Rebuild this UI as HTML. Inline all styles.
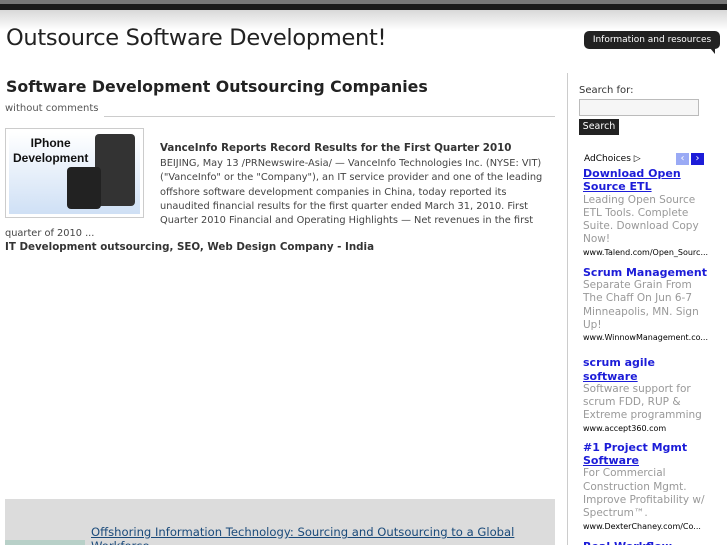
<!DOCTYPE html>
<html><head><meta charset="utf-8"><style>
*{margin:0;padding:0;box-sizing:border-box}
html{overflow:hidden;width:727px;height:545px}
body{width:727px;height:545px;overflow:hidden;background:#fff;font-family:"DejaVu Sans","Liberation Sans",sans-serif;color:#333;position:relative}
.a{position:absolute;white-space:nowrap}
.sb div{white-space:nowrap}
</style></head><body>
<div class="a" style="left:0;top:0;width:727px;height:4px;background:#777"></div>
<div class="a" style="left:0;top:4px;width:727px;height:6px;background:#1a1a1a"></div>
<div class="a" style="left:0;top:10px;width:727px;height:20px;background:linear-gradient(#d8d8d8,#fff)"></div>
<div class="a" style="left:6px;top:25px;font-size:22.5px;color:#222;letter-spacing:-0.3px">Outsource Software Development!</div>
<div class="a" style="left:584px;top:31px;width:136px;height:18px;background:#222;border-radius:5px;color:#fff;font-size:9px;line-height:18px;text-align:center">Information and resources</div>
<div class="a" style="left:710px;top:48px;width:0;height:0;border-left:5px solid transparent;border-top:6px solid #222"></div>
<div class="a" style="left:6px;top:77px;font-size:15.8px;font-weight:bold;color:#222">Software Development Outsourcing Companies</div>
<div class="a" style="left:5px;top:103px;font-size:10px;color:#555">without comments</div>
<div class="a" style="left:104px;top:116px;width:451px;height:1px;background:#ccc"></div>
<div class="a" style="left:567px;top:73px;width:1px;height:472px;background:#ccc"></div>
<div class="a" style="left:5px;top:128px;width:139px;height:90px;border:1px solid #ccc;padding:3px"><div style="width:100%;height:100%;background:linear-gradient(#fff,#cfe0f5);position:relative"><div style="position:absolute;left:4px;top:4px;font:bold 12px 'Liberation Sans',sans-serif;color:#111;text-align:center;line-height:15px">IPhone<br>Development</div><div style="position:absolute;left:86px;top:2px;width:40px;height:72px;background:#333;border-radius:4px"></div><div style="position:absolute;left:58px;top:35px;width:34px;height:42px;background:#222;border-radius:4px"></div></div></div>
<div class="a" style="left:160px;top:142px;font-size:10.3px;font-weight:bold;color:#333">VanceInfo Reports Record Results for the First Quarter 2010</div>
<div class="a" style="left:160px;top:157px;font-size:9.8px;line-height:14.3px;color:#444">BEIJING, May 13 /PRNewswire-Asia/ — VanceInfo Technologies Inc. (NYSE: VIT)<br>("VanceInfo" or the "Company"), an IT service provider and one of the leading<br>offshore software development companies in China, today reported its<br>unaudited financial results for the first quarter ended March 31, 2010. First<br>Quarter 2010 Financial and Operating Highlights — Net revenues in the first</div>
<div class="a" style="left:5px;top:228px;font-size:9.8px;color:#444">quarter of 2010 ...</div>
<div class="a" style="left:5px;top:241px;font-size:10.3px;font-weight:bold;color:#333">IT Development outsourcing, SEO, Web Design Company - India</div>
<div class="a" style="left:5px;top:499px;width:550px;height:46px;background:#dcdcdc"></div>
<div class="a" style="left:5px;top:540px;width:80px;height:5px;background:#b8d0c8"></div>
<div class="a" style="left:91px;top:525px;font-size:11.6px;color:#1a4a7a;text-decoration:underline">Offshoring Information Technology: Sourcing and Outsourcing to a Global</div>
<div class="a" style="left:91px;top:539px;font-size:11.6px;color:#1a4a7a;text-decoration:underline">Workforce</div>
<div class="a" style="left:579px;top:85px;font-size:10px;color:#333">Search for:</div>
<div class="a" style="left:579px;top:99px;width:120px;height:17px;border:1px solid #bbb;background:#f6f6f6"></div>
<div class="a" style="left:579px;top:119px;width:40px;height:16px;background:#222;color:#fff;font-size:9.5px;line-height:16px;text-align:center">Search</div>
<div class="a" style="left:584px;top:154px;font-size:9px;color:#000">AdChoices ▷</div>
<div class="a" style="left:676px;top:153px;width:13px;height:12px;background:#9aaaf5;color:#fff;font-size:10px;line-height:12px;text-align:center">‹</div>
<div class="a" style="left:691px;top:153px;width:13px;height:12px;background:#1c1cd8;color:#fff;font-size:10px;line-height:12px;text-align:center">›</div>
<div class="a sb" style="left:583px;top:167px;font-size:11px;line-height:13.3px">
<div style="color:#1c1cd8;font-weight:bold;text-decoration:underline">Download Open<br>Source ETL</div>
<div style="color:#999;font-size:10.5px">Leading Open Source<br>ETL Tools. Complete<br>Suite. Download Copy<br>Now!</div>
<div style="color:#000;font-size:8px;line-height:11px">www.Talend.com/Open_Sourc...</div>
<div style="color:#1c1cd8;font-weight:bold;margin-top:8px">Scrum Management</div>
<div style="color:#999;font-size:10.5px">Separate Grain From<br>The Chaff On Jun 6-7<br>Minneapolis, MN. Sign<br>Up!</div>
<div style="color:#000;font-size:8px;line-height:11px">www.WinnowManagement.co...</div>
<div style="color:#1c1cd8;font-weight:bold;margin-top:13px">scrum agile<br><u>software</u></div>
<div style="color:#999;font-size:10.5px">Software support for<br>scrum FDD, RUP &amp;<br>Extreme programming</div>
<div style="color:#000;font-size:8px;line-height:11px">www.accept360.com</div>
<div style="color:#1c1cd8;font-weight:bold;margin-top:7px">#1 Project Mgmt<br><u>Software</u></div>
<div style="color:#999;font-size:10.5px">For Commercial<br>Construction Mgmt.<br>Improve Profitability w/<br>Spectrum™.</div>
<div style="color:#000;font-size:8px;line-height:11px">www.DexterChaney.com/Co...</div>
<div style="color:#1c1cd8;font-weight:bold;margin-top:8px;text-decoration:underline">Real Workflow</div>
</div>
</body></html>
